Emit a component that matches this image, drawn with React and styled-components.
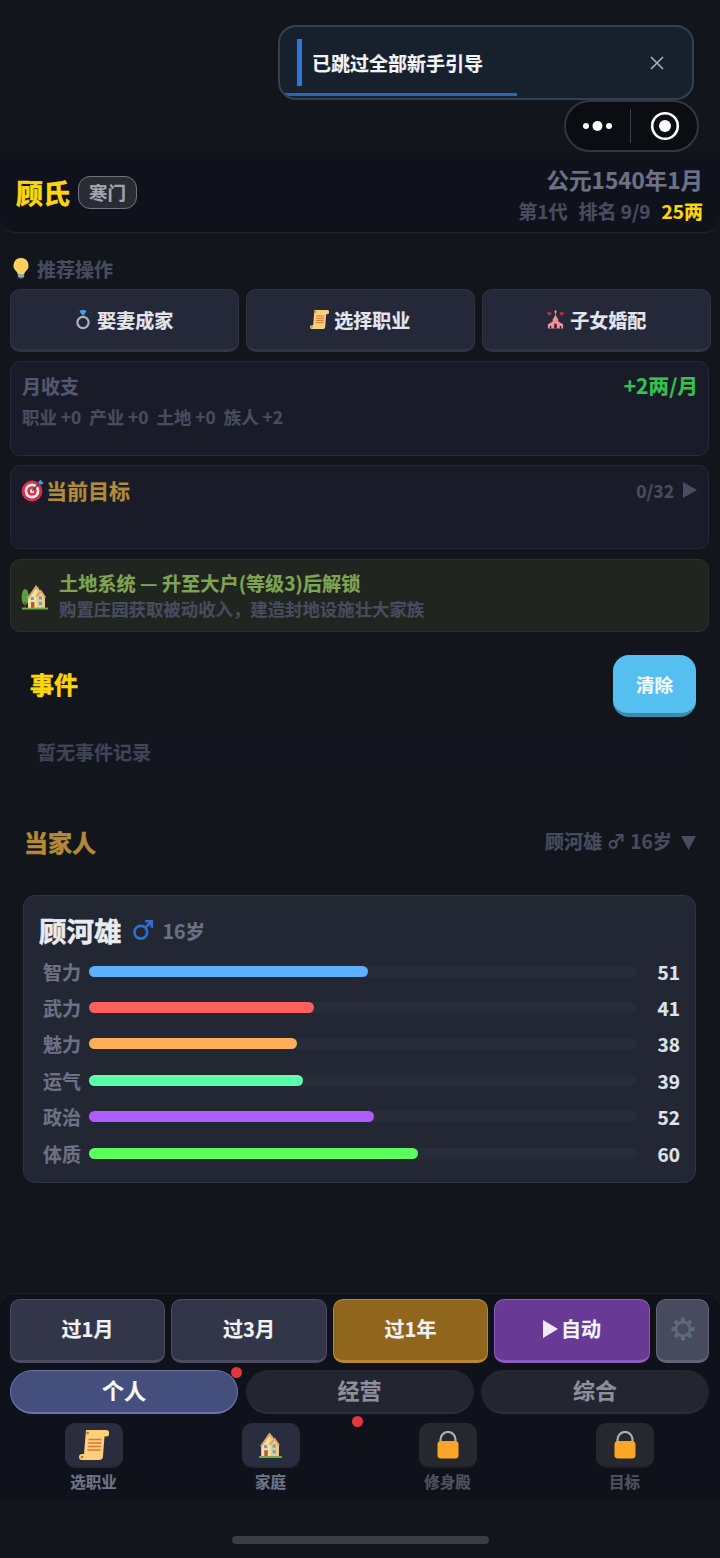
import styled, { createGlobalStyle } from "styled-components";

const GlobalStyle = createGlobalStyle`
  * { box-sizing: border-box; }
  html, body { margin: 0; padding: 0; background: #12151c; }
  body {
    font-family: "Noto Sans CJK SC", "Noto Sans", sans-serif;
    font-weight: 700;
    -webkit-text-stroke: 0.2px currentColor;
  }
`;

const Page = styled.div`
  position: relative;
  width: 720px;
  height: 1558px;
  overflow: hidden;
  padding-top: 153px;
  display: flex;
  flex-direction: column;
  background: #12151c;
`;

const Toast = styled.div`
  position: absolute;
  left: 278px;
  top: 25px;
  width: 416px;
  height: 75px;
  padding: 12px 28px 0 17px;
  display: flex;
  align-items: flex-start;
  gap: 10px;
  background: #16212d;
  border: 2px solid #33404d;
  border-radius: 18px;
  overflow: hidden;
  color: #f2f4f7;
  font-size: 19px;
  line-height: 47px;
`;
const ToastBar = styled.span`
  width: 5px;
  height: 47px;
  background: #2f74e0;
`;
const ToastText = styled.span`
  flex: 1;
`;
const ToastClose = styled.span`
  display: flex;
  height: 47px;
  align-items: center;
`;
const ToastProgress = styled.div`
  position: absolute;
  left: 0;
  bottom: 2px;
  height: 3px;
  background: #2e62b8;
`;

const Capsule = styled.div`
  position: absolute;
  left: 564px;
  top: 100px;
  width: 135px;
  height: 52px;
  display: flex;
  align-items: center;
  background: #0b0d12;
  border: 2px solid #33363d;
  border-radius: 26px;
`;
const CapsuleSide = styled.div`
  flex: 1;
  display: flex;
  justify-content: center;
  align-items: center;
  padding-left: ${(p) => p.$shift || 0}px;
`;
const CapsuleLine = styled.div`
  width: 1px;
  height: 34px;
  background: #3c3f46;
`;

const Header = styled.header`
  height: 80px;
  padding: 0 17px 0 16px;
  display: flex;
  justify-content: space-between;
  align-items: center;
  background: #0f121b;
  border-bottom: 1px solid #22262f;
  border-radius: 0 0 16px 16px;
`;
const HeaderLeft = styled.div`
  display: flex;
  align-items: center;
  gap: 8px;
`;
const ClanName = styled.div`
  color: #ffd60a;
  font-size: 27px;
  line-height: 34px;
  -webkit-text-stroke: 0.6px currentColor;
`;
const ClanTag = styled.div`
  height: 33px;
  padding: 0 10px;
  line-height: 30px;
  font-size: 18.5px;
  color: #a3a6ad;
  background: #2a2c33;
  border: 1.5px solid #72757c;
  border-radius: 12px;
`;
const HeaderRight = styled.div`
  display: flex;
  flex-direction: column;
  align-items: flex-end;
  padding-top: 3px;
`;
const DateText = styled.div`
  color: #6c7186;
  font-size: 22.5px;
  line-height: 30px;
`;
const InfoLine = styled.div`
  margin-top: 3px;
  display: flex;
  gap: 11px;
  color: #474c5f;
  font-size: 19px;
  line-height: 27px;
`;
const Money = styled.span`
  color: #ffd60a;
`;

const Content = styled.main`
  padding: 23px 10px 0;
  display: flex;
  flex-direction: column;
`;
const SectionLabel = styled.div`
  height: 24px;
  display: flex;
  align-items: center;
  gap: 7px;
  padding-left: 2px;
  color: #474c5f;
  font-size: 19px;
`;
const QuickRow = styled.div`
  margin-top: 9px;
  display: grid;
  grid-template-columns: repeat(3, 228.5px);
  gap: 7.5px;
`;
const QuickButton = styled.div`
  height: 62.5px;
  display: flex;
  align-items: center;
  justify-content: center;
  gap: ${(p) => p.$gap}px;
  color: #e4e6ef;
  font-size: 19px;
  background: #252838;
  border: 1.5px solid #2f3344;
  border-bottom-width: 3px;
  border-radius: 10px;
`;
const Panel = styled.section`
  border: 1.5px solid #252a38;
  border-radius: 10px;
  background: #191c28;
`;
const IncomePanel = styled(Panel)`
  margin-top: 9.5px;
  height: 95px;
  width: 699px;
  padding: 10px 10px 0 11px;
`;
const PanelRow = styled.div`
  display: flex;
  justify-content: space-between;
  align-items: center;
`;
const MutedTitle = styled.div`
  color: #535871;
  font-size: 19px;
  line-height: 27px;
`;
const Gain = styled.div`
  color: #34c24f;
  font-size: 20.8px;
  line-height: 27px;
`;
const IncomeDetail = styled.div`
  margin-top: 5px;
  display: flex;
  gap: 8px;
  color: #474c5f;
  font-size: 17.4px;
  line-height: 25px;
`;
const GoalPanel = styled(Panel)`
  margin-top: 9px;
  height: 84px;
  width: 699px;
  padding: 9px 11px 0 10px;
`;
const GoalTitle = styled.div`
  display: flex;
  align-items: center;
  gap: 2px;
  color: #b48a35;
  font-size: 21px;
  line-height: 30px;
`;
const GoalCount = styled.div`
  display: flex;
  align-items: center;
  gap: 9px;
  color: #474c5f;
  font-size: 17.5px;
`;
const LandPanel = styled.section`
  margin-top: 10px;
  height: 73px;
  width: 699px;
  padding: 1px 10px 0;
  display: flex;
  align-items: center;
  gap: 10px;
  background: #20251f;
  border: 1.5px solid #2c3229;
  border-radius: 10px;
`;
const LandText = styled.div`
  display: flex;
  flex-direction: column;
`;
const LandTitle = styled.div`
  color: #7fa552;
  font-size: 19.2px;
  line-height: 25px;
`;
const LandHint = styled.div`
  color: #474c5f;
  font-size: 17.4px;
  line-height: 25px;
`;

const EventsHead = styled.div`
  margin-top: 23px;
  padding: 0 14px 0 20px;
  display: flex;
  justify-content: space-between;
  align-items: center;
`;
const EventsTitle = styled.h2`
  margin: 0;
  padding-bottom: 4px;
  color: #ffd60a;
  font-size: 24px;
  line-height: 34px;
  -webkit-text-stroke: 0.6px currentColor;
`;
const ClearButton = styled.div`
  width: 83px;
  height: 62px;
  display: flex;
  align-items: center;
  justify-content: center;
  color: #f4fbff;
  font-size: 18.5px;
  background: #55bff0;
  border-bottom: 4px solid #3d8bab;
  border-radius: 16px;
`;
const EventsEmpty = styled.div`
  margin: 6px 14px 0 15px;
  height: 56px;
  padding: 0 12px;
  display: flex;
  align-items: center;
  color: #3f4456;
  font-size: 19px;
  background: #13161f;
  border-radius: 10px;
`;
const HeirHead = styled.div`
  margin-top: 42px;
  padding: 0 14px 0 14px;
  height: 40px;
  display: flex;
  justify-content: space-between;
  align-items: center;
`;
const HeirTitle = styled.h2`
  margin: 0;
  color: #b48a35;
  font-size: 24px;
  -webkit-text-stroke: 0.6px currentColor;
`;
const HeirSummary = styled.div`
  display: flex;
  align-items: center;
  gap: 9px;
  color: #474c5f;
  font-size: 19.2px;
`;
const DownMark = styled.span`
  display: flex;
  padding-top: 3px;
`;
const HeirCard = styled.section`
  margin: 34px 14px 0 13px;
  height: 288px;
  padding: 12px 15px 0 15px;
  background: #222733;
  border: 1.5px solid #2f3342;
  border-radius: 12px;
`;
const HeirLine = styled.div`
  display: flex;
  align-items: center;
  height: 44px;
`;
const HeirName = styled.div`
  color: #e9ebf1;
  font-size: 27.5px;
  -webkit-text-stroke: 0.6px currentColor;
`;
const GenderMark = styled.span`
  margin-left: 10px;
  display: flex;
`;
const HeirAge = styled.div`
  margin-left: 9px;
  color: #6c7186;
  font-size: 19.5px;
`;
const StatList = styled.div`
  margin-top: 1px;
  display: flex;
  flex-direction: column;
`;
const StatRow = styled.div`
  height: 36.4px;
  display: grid;
  grid-template-columns: 38px 548px 1fr;
  column-gap: 8px;
  align-items: center;
  padding-left: 4px;
  color: #6c7186;
  font-size: 19px;
`;
const StatTrack = styled.div`
  height: 11px;
  border-radius: 6px;
  background: #282c38;
`;
const StatFill = styled.div`
  height: 100%;
  border-radius: 6px;
  background: ${(p) => p.$color};
`;
const StatValue = styled.div`
  text-align: right;
  color: #dfe2ea;
  font-size: 19px;
`;

const BottomBar = styled.footer`
  margin-top: auto;
  height: 207px;
  padding: 5px 10px 0;
  background: #0f121b;
  border-top: 1.5px solid #1d212b;
  border-radius: 14px 14px 0 0;
`;
const ActionRow = styled.div`
  display: grid;
  grid-template-columns: 155px 156px 155px 156px 53px;
  gap: 6px;
`;
const ActionButton = styled.div`
  height: 64px;
  padding-bottom: 3px;
  display: flex;
  align-items: center;
  justify-content: center;
  gap: 3px;
  color: #f1f2f5;
  font-size: 20px;
  background: ${(p) => p.$bg};
  border: 1.5px solid ${(p) => p.$edge};
  border-bottom-width: 3px;
  border-radius: 10px;
`;
const TabRow = styled.div`
  margin-top: 7px;
  display: grid;
  grid-template-columns: repeat(3, 228px);
  gap: 7.5px;
`;
const Tab = styled.div`
  position: relative;
  height: 44px;
  padding-bottom: 5px;
  display: flex;
  align-items: center;
  justify-content: center;
  font-size: 22px;
  color: ${(p) => (p.$active ? "#f6f7fb" : "#8d9099")};
  background: ${(p) => (p.$active ? "#454f7e" : "#232631")};
  border: 1.5px solid ${(p) => (p.$active ? "#6a74a6" : "#232631")};
  border-bottom: 2px solid ${(p) => (p.$active ? "#6a74a6" : "#2c2f3a")};
  border-radius: 23px;
`;
const RedDot = styled.span`
  position: absolute;
  width: 11px;
  height: 11px;
  border-radius: 50%;
  background: #e5363c;
  top: ${(p) => p.$top}px;
  right: ${(p) => p.$right}px;
`;
const NavRow = styled.nav`
  margin-top: 9px;
  margin-left: -5px;
  display: grid;
  grid-template-columns: repeat(4, 177px);
`;
const NavItem = styled.div`
  display: flex;
  flex-direction: column;
  align-items: center;
  gap: 1px;
`;
const NavIcon = styled.div`
  width: 58px;
  height: 45px;
  display: flex;
  align-items: center;
  justify-content: center;
  background: ${(p) => (p.$locked ? "#27282e" : "#2a2d3d")};
  border-bottom: 2px solid ${(p) => (p.$locked ? "#1f2026" : "#232636")};
  border-radius: 10px;
`;
const NavLabel = styled.div`
  color: ${(p) => (p.$locked ? "#4f525c" : "#6f7488")};
  font-size: 15.5px;
  line-height: 24px;
`;
const HomeArea = styled.div`
  height: 58px;
  padding-top: 36px;
  display: flex;
  justify-content: center;
`;
const HomeBar = styled.div`
  width: 257px;
  height: 8px;
  border-radius: 4px;
  background: #3a3c43;
`;

function Bulb() {
  return (
    <svg width="18" height="22" viewBox="0 0 18 22">
      <path d="M9 1a7.5 7.5 0 0 0-4.6 13.4c.9.8 1.1 1.6 1.2 2.6h6.8c.1-1 .3-1.8 1.2-2.6A7.5 7.5 0 0 0 9 1z" fill="#ffd15c" />
      <rect x="5.8" y="17" width="6.4" height="3.4" rx="1" fill="#9aa4ad" />
      <rect x="7" y="20" width="4" height="1.6" rx=".8" fill="#6f7880" />
    </svg>
  );
}

function Ring() {
  return (
    <svg width="16" height="21" viewBox="0 0 16 21">
      <circle cx="8" cy="13.5" r="5.6" fill="none" stroke="#aab4c0" strokeWidth="2.2" />
      <path d="M4.5 2.5 6 1h4l1.5 1.5L8 7z" fill="#3f9fe0" />
    </svg>
  );
}

function Scroll({ size = 19 }) {
  return (
    <svg width={size} height={size} viewBox="0 0 30 30">
      <path d="M7 0H27a3.3 3.3 0 0 1 0 6.6H25.5L24 26a4 4 0 0 1-4 4H3a3 3 0 0 1 0-6H5z" fill="#ffcf7a" />
      <circle cx="8.6" cy="3" r="1.3" fill="#a8743a" />
      <circle cx="3" cy="27" r="1.3" fill="#a8743a" />
      <path d="M9.5 9.5h13M9.2 13h13M8.9 16.5h13M8.6 20h13" stroke="#d9743a" strokeWidth="1.5" />
    </svg>
  );
}

function Wedding() {
  return (
    <svg width="19" height="19" viewBox="0 0 20 20">
      <path d="M10 0v5M8.4 2h3.2" stroke="#c9a0a0" strokeWidth="1" />
      <path d="M10 5 13 10v2l5 3v4.5H2V15l5-3v-2z" fill="#f58e96" />
      <path d="M8.7 19.5v-4a1.3 1.3 0 0 1 2.6 0v4zM4 19.5v-2.7h1.5v2.7zM14.5 19.5v-2.7H16v2.7z" fill="#23263a" />
      <path d="M3.5 6 1.4 4a1.1 1.1 0 0 1 2.1-1 1.1 1.1 0 0 1 2.1 1zM16.5 6l-2.1-2a1.1 1.1 0 0 1 2.1-1 1.1 1.1 0 0 1 2.1 1z" fill="#e0244e" />
    </svg>
  );
}

function Target() {
  return (
    <svg width="23" height="23" viewBox="0 0 23 23">
      <circle cx="11" cy="12" r="10.4" fill="#dc2f4a" />
      <circle cx="11" cy="12" r="7.4" fill="#f4eeee" />
      <circle cx="11" cy="12" r="4.8" fill="#dc2f4a" />
      <circle cx="11" cy="12" r="2.2" fill="#f4eeee" />
      <path d="M11 12 19 4" stroke="#39454f" strokeWidth="1.4" />
      <path d="M17.5 2.5 20 .5l.6 2.2 2.2.6-2 2.5-3-.8z" fill="#4b9fe0" />
    </svg>
  );
}

function House({ size = 28, tree = false }) {
  return (
    <svg width={size} height={size} viewBox={tree ? "0 0 28 28" : "4 1.5 24 26"}>
      {tree && <ellipse cx="4.2" cy="15" rx="3.6" ry="8" fill="#5c9e3f" />}
      {tree && <rect x="3.6" y="20" width="1.2" height="6" fill="#5a3b26" />}
      <path d="M7 15 15 4l9 11v11H7z" fill="#f6dfa4" />
      <path d="M15 4l9 11v11h-8V15z" fill="#eccb80" />
      <path d="M6 16 15 3l3.5 4-2 1-1.5-1.6L7.5 17zM16 15l-1.5-1L20 7.6l5 7.4-1.4 1-3.6-5.4z" fill="#d9a273" />
      <rect x="10" y="20" width="3.4" height="6" fill="#c6533f" />
      <rect x="9.8" y="15" width="3" height="3" fill="#57a5dc" />
      <rect x="18" y="14.5" width="3" height="3" fill="#57a5dc" />
      <rect x="18" y="20" width="3" height="3" fill="#57a5dc" />
      <rect x={tree ? 1 : 5} y="25.6" width={tree ? 26 : 22} height="1.9" fill="#6fae45" />
    </svg>
  );
}

function Lock() {
  return (
    <svg width="22" height="28" viewBox="0 0 22 28">
      <path d="M3.5 13V8.5a7.5 7.5 0 0 1 15 0V13" fill="none" stroke="#a9b0b8" strokeWidth="2.2" />
      <rect x="0.5" y="10" width="21" height="17.5" rx="3.5" fill="#fca627" />
    </svg>
  );
}

function Gear() {
  const teeth = [0, 45, 90, 135, 180, 225, 270, 315];
  return (
    <svg width="24" height="24" viewBox="0 0 24 24">
      {teeth.map((deg) => (
        <rect key={deg} x="10" y="0.5" width="4" height="5" rx="1" fill="#5e6b78" transform={`rotate(${deg} 12 12)`} />
      ))}
      <circle cx="12" cy="12" r="7" fill="none" stroke="#5e6b78" strokeWidth="2.6" />
    </svg>
  );
}

function MaleSign({ size, color, width = 2.4 }) {
  return (
    <svg width={size} height={size} viewBox="0 0 20 20">
      <circle cx="8" cy="12" r="5.8" fill="none" stroke={color} strokeWidth={width} />
      <path d="M12.2 7.8 18 2M12 2h6v6" fill="none" stroke={color} strokeWidth={width} />
    </svg>
  );
}

function Triangle({ dir, color, w, h }) {
  const d = dir === "right" ? `M0 0L${w} ${h / 2}L0 ${h}z` : `M0 0H${w}L${w / 2} ${h}z`;
  return (
    <svg width={w} height={h} viewBox={`0 0 ${w} ${h}`}>
      <path d={d} fill={color} />
    </svg>
  );
}

const stats = [
  { name: "智力", value: 51, color: "#5cb0ff" },
  { name: "武力", value: 41, color: "#ff6060" },
  { name: "魅力", value: 38, color: "#ffae5c" },
  { name: "运气", value: 39, color: "#5cffae" },
  { name: "政治", value: 52, color: "#ae5cff" },
  { name: "体质", value: 60, color: "#5cff5c" },
];

const actions = [
  { label: "过1月", bg: "#333648", edge: "#494d63" },
  { label: "过3月", bg: "#333648", edge: "#494d63" },
  { label: "过1年", bg: "#8f661b", edge: "#b98a2c" },
  { label: "自动", bg: "#683a96", edge: "#8a5db8", play: true },
];

const navItems = [
  { label: "选职业", icon: <Scroll size={30} /> },
  { label: "家庭", icon: <House size={27} /> },
  { label: "修身殿", icon: <Lock />, locked: true },
  { label: "目标", icon: <Lock />, locked: true },
];

export default function App() {
  return (
    <Page>
      <GlobalStyle />
      <Toast>
        <ToastBar />
        <ToastText>已跳过全部新手引导</ToastText>
        <ToastClose>
          <svg width="14" height="14" viewBox="0 0 14 14">
            <path d="M1 1l12 12M13 1 1 13" stroke="#a9b2bc" strokeWidth="1.6" />
          </svg>
        </ToastClose>
        <ToastProgress style={{ width: "57.5%" }} />
      </Toast>
      <Capsule>
        <CapsuleSide>
          <svg width="29" height="12" viewBox="0 0 29 12">
            <circle cx="3" cy="6" r="3" fill="#fff" />
            <circle cx="14.5" cy="6" r="5" fill="#fff" />
            <circle cx="26" cy="6" r="3" fill="#fff" />
          </svg>
        </CapsuleSide>
        <CapsuleLine />
        <CapsuleSide $shift={3}>
          <svg width="30" height="30" viewBox="0 0 30 30">
            <circle cx="15" cy="15" r="12.8" fill="none" stroke="#fff" strokeWidth="2.6" />
            <circle cx="15" cy="15" r="6" fill="#fff" />
          </svg>
        </CapsuleSide>
      </Capsule>

      <Header>
        <HeaderLeft>
          <ClanName>顾氏</ClanName>
          <ClanTag>寒门</ClanTag>
        </HeaderLeft>
        <HeaderRight>
          <DateText>公元1540年1月</DateText>
          <InfoLine>
            <span>第1代</span>
            <span>排名 9/9</span>
            <Money>25两</Money>
          </InfoLine>
        </HeaderRight>
      </Header>

      <Content>
        <SectionLabel>
          <Bulb />
          推荐操作
        </SectionLabel>
        <QuickRow>
          <QuickButton $gap={6}>
            <Ring />
            娶妻成家
          </QuickButton>
          <QuickButton $gap={5}>
            <Scroll />
            选择职业
          </QuickButton>
          <QuickButton $gap={5}>
            <Wedding />
            子女婚配
          </QuickButton>
        </QuickRow>

        <IncomePanel>
          <PanelRow>
            <MutedTitle>月收支</MutedTitle>
            <Gain>+2两/月</Gain>
          </PanelRow>
          <IncomeDetail>
            <span>职业 +0</span>
            <span>产业 +0</span>
            <span>土地 +0</span>
            <span>族人 +2</span>
          </IncomeDetail>
        </IncomePanel>

        <GoalPanel>
          <PanelRow>
            <GoalTitle>
              <Target />
              当前目标
            </GoalTitle>
            <GoalCount>
              0/32
              <Triangle dir="right" color="#474c5f" w={14} h={16} />
            </GoalCount>
          </PanelRow>
        </GoalPanel>

        <LandPanel>
          <House size={28} tree />
          <LandText>
            <LandTitle>土地系统 — 升至大户(等级3)后解锁</LandTitle>
            <LandHint>购置庄园获取被动收入，建造封地设施壮大家族</LandHint>
          </LandText>
        </LandPanel>

        <EventsHead>
          <EventsTitle>事件</EventsTitle>
          <ClearButton>清除</ClearButton>
        </EventsHead>
        <EventsEmpty>暂无事件记录</EventsEmpty>

        <HeirHead>
          <HeirTitle>当家人</HeirTitle>
          <HeirSummary>
            <span>顾河雄 ♂ 16岁</span>
            <DownMark>
              <Triangle dir="down" color="#474c5f" w={15} h={14} />
            </DownMark>
          </HeirSummary>
        </HeirHead>
        <HeirCard>
          <HeirLine>
            <HeirName>顾河雄</HeirName>
            <GenderMark>
              <MaleSign size={22} color="#2f6fd0" />
            </GenderMark>
            <HeirAge>16岁</HeirAge>
          </HeirLine>
          <StatList>
            {stats.map((s) => (
              <StatRow key={s.name}>
                <span>{s.name}</span>
                <StatTrack>
                  <StatFill $color={s.color} style={{ width: `${s.value}%` }} />
                </StatTrack>
                <StatValue>{s.value}</StatValue>
              </StatRow>
            ))}
          </StatList>
        </HeirCard>
      </Content>

      <BottomBar>
        <ActionRow>
          {actions.map((a) => (
            <ActionButton key={a.label} $bg={a.bg} $edge={a.edge}>
              {a.play && <Triangle dir="right" color="#efeaf5" w={15} h={18} />}
              {a.label}
            </ActionButton>
          ))}
          <ActionButton $bg="#484b5d" $edge="#62657a">
            <Gear />
          </ActionButton>
        </ActionRow>
        <TabRow>
          <Tab $active>
            个人
            <RedDot $top={-4} $right={-5} />
          </Tab>
          <Tab>
            经营
            <RedDot $top={45} $right={110} />
          </Tab>
          <Tab>综合</Tab>
        </TabRow>
        <NavRow>
          {navItems.map((n) => (
            <NavItem key={n.label}>
              <NavIcon $locked={n.locked}>{n.icon}</NavIcon>
              <NavLabel $locked={n.locked}>{n.label}</NavLabel>
            </NavItem>
          ))}
        </NavRow>
      </BottomBar>
      <HomeArea>
        <HomeBar />
      </HomeArea>
    </Page>
  );
}
